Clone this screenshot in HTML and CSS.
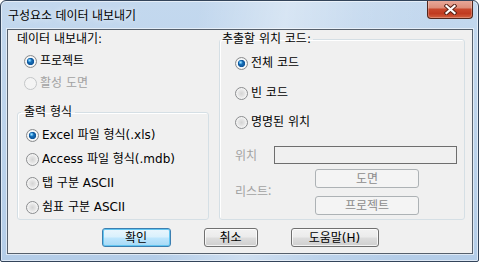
FILE: index.html
```html
<!DOCTYPE html>
<html lang="ko">
<head>
<meta charset="utf-8">
<title>구성요소 데이터 내보내기</title>
<link rel="stylesheet" href="styles.css">
</head>
<body>
<div class="window">
  <div class="titlebar">
    <span class="title">구성요소 데이터 내보내기</span>
    <div class="close">
      <svg width="13" height="11" viewBox="0 0 13 11">
        <path d="M2.5 2 L10.5 9 M10.5 2 L2.5 9" stroke="#5a2418" stroke-width="4.2" stroke-linecap="square" fill="none"/>
        <path d="M2.5 2 L10.5 9 M10.5 2 L2.5 9" stroke="#ffffff" stroke-width="2.2" stroke-linecap="square" fill="none"/>
      </svg>
    </div>
  </div>
  <div class="client">
    <div class="panels">
      <div class="left">
        <div class="caption">데이터 내보내기:</div>
        <label class="opt top1"><span class="radio on"></span>프로젝트</label>
        <label class="opt top2 disabled"><span class="radio"></span>활성 도면</label>
        <fieldset class="group format">
          <legend>출력 형식</legend>
          <div class="opts">
            <label class="opt"><span class="radio on"></span>Excel 파일 형식(.xls)</label>
            <label class="opt"><span class="radio"></span>Access 파일 형식(.mdb)</label>
            <label class="opt"><span class="radio"></span>탭 구분 ASCII</label>
            <label class="opt"><span class="radio"></span>쉼표 구분 ASCII</label>
          </div>
        </fieldset>
      </div>
      <fieldset class="group code">
        <legend>추출할 위치 코드:</legend>
        <label class="opt r1"><span class="radio on"></span>전체 코드</label>
        <label class="opt r2"><span class="radio"></span>빈 코드</label>
        <label class="opt r3"><span class="radio"></span>명명된 위치</label>
        <div class="loc">
          <span class="muted">위치</span>
          <span class="textbox"></span>
          <span class="muted list-label">리스트:</span>
          <div class="list-buttons">
            <span class="btn disabled">도면</span>
            <span class="btn disabled">프로젝트</span>
          </div>
        </div>
      </fieldset>
    </div>
    <div class="buttons">
      <span class="btn default ok">확인</span>
      <span class="btn cancel">취소</span>
      <span class="btn help">도움말(H)</span>
    </div>
  </div>
</div>
</body>
</html>
```

FILE: styles.css
```css
html, body {
  margin: 0;
  padding: 0;
  background: #ffffff;
}

body {
  font-family: "DejaVu Sans", "Noto Sans CJK KR", sans-serif;
  font-size: 12px;
  line-height: 16px;
  color: #000000;
}

.window {
  width: 479px;
  height: 262px;
  box-sizing: border-box;
  border: 1px solid #33445a;
  border-radius: 6px 6px 2px 2px;
  background:
    linear-gradient(100deg, rgba(255,255,255,0) 0%, rgba(255,255,255,0) 38%, rgba(255,255,255,0.35) 55%, rgba(255,255,255,0.1) 70%, rgba(255,255,255,0) 85%),
    linear-gradient(180deg, #c3d8ee 0%, #bcd3eb 50%, #b4cde8 100%);
  box-shadow: inset 0 0 0 1px rgba(255,255,255,0.55);
  display: flex;
  flex-direction: column;
  overflow: hidden;
}

.titlebar {
  height: 28px;
  display: flex;
  align-items: flex-start;
  justify-content: space-between;
}

.title {
  margin: 6px 0 0 7px;
  font-family: "Noto Sans CJK KR", sans-serif;
  color: #000000;
  text-shadow: 0 0 6px rgba(255,255,255,0.9);
}

.close {
  width: 46px;
  height: 19px;
  margin-top: -1px;
  margin-right: 5px;
  box-sizing: border-box;
  border: 1px solid #52261c;
  border-top: none;
  border-radius: 0 0 4px 4px;
  background: linear-gradient(180deg, #e9ab9c 0%, #de8f7b 42%, #c8472c 52%, #c03a20 75%, #d2603f 100%);
  box-shadow: inset 0 0 0 1px rgba(255,255,255,0.25);
  display: flex;
  align-items: center;
  justify-content: center;
}

.close svg {
  display: block;
  margin-top: 1px;
}

.client {
  flex: 1;
  margin: 0 5px 7px 6px;
  border: 1px solid #56606c;
  box-shadow: 0 0 0 1px rgba(255,255,255,0.55);
  background: #f0f0f0;
  padding: 1px 7px 0 9px;
  display: flex;
  flex-direction: column;
}

.panels {
  display: grid;
  grid-template-columns: 192px 1fr;
  column-gap: 10px;
  height: 189px;
}

.left {
  display: flex;
  flex-direction: column;
}

.caption {
  height: 16px;
}

.opt {
  display: flex;
  align-items: center;
  height: 16px;
  gap: 3px;
  white-space: nowrap;
}

.top1 {
  margin: 6px 0 0 7px;
}

.top2 {
  margin: 6px 0 0 7px;
}

.disabled {
  color: #a2a2a2;
}

.radio {
  width: 13px;
  height: 13px;
  flex: none;
  box-sizing: border-box;
  border-radius: 50%;
  border: 1px solid #8a8c8e;
  background: radial-gradient(circle at 50% 50%, #d4d4d4 0, #e4e4e4 3px, #f3f3f3 5px, #fafafa 6px);
}

.radio.on {
  background:
    radial-gradient(circle at 4.6px 4.4px, #aee4ff 0, #3e9fe0 1.4px, rgba(40,130,210,0) 2.2px),
    radial-gradient(circle at 50% 50%, #1b78c2 0, #0f5599 3.4px, #eef4f8 3.9px, #fbfbfb 4.6px, #dedede 6px);
}

.disabled .radio {
  border-color: #c4c6c8;
  background: #f4f4f4;
}

.group {
  margin: 0;
  padding: 0;
  min-width: 0;
  border: 1px solid #d5dfe5;
  border-radius: 3px;
  box-shadow: inset 1px 1px 0 #ffffff;
}

.group legend {
  line-height: 16px;
  height: 16px;
}

.format {
  margin-top: 13px;
  flex: 1;
  padding: 0 0 0 8px;
}

.format legend {
  margin-left: -5px;
  padding: 0 3px;
}

.opts {
  display: flex;
  flex-direction: column;
  gap: 8px;
  padding-top: 7px;
}

.code {
  padding: 0 0 0 15px;
}

.code legend {
  margin-left: -15px;
  padding: 0 2px;
}

.r1 {
  margin-top: 8px;
}

.r2 {
  margin-top: 14px;
}

.r3 {
  margin-top: 13px;
}

.loc {
  margin-top: 16px;
  display: grid;
  grid-template-columns: 39px 183px;
  grid-template-rows: 18px auto;
  row-gap: 5px;
  align-items: center;
}

.muted {
  color: #a2a2a2;
  font-family: "Noto Sans CJK KR", sans-serif;
  white-space: nowrap;
}

.textbox {
  height: 18px;
  box-sizing: border-box;
  border: 1px solid #6e6e6e;
  background: #f0f0f0;
}

.list-label {
  margin-bottom: 3px;
}

.list-buttons {
  display: flex;
  flex-direction: column;
  gap: 8px;
  margin-left: 41px;
}

.btn {
  height: 19px;
  box-sizing: border-box;
  border: 1px solid #707070;
  border-radius: 3px;
  background: linear-gradient(180deg, #f2f2f2 0%, #ebebeb 48%, #dddddd 52%, #cfcfcf 100%);
  box-shadow: inset 0 0 0 1px rgba(255,255,255,0.75);
  display: flex;
  align-items: center;
  justify-content: center;
  line-height: 16px;
  font-family: "DejaVu Sans", "Noto Sans CJK KR", sans-serif;
  color: #000000;
  white-space: nowrap;
}

.btn.disabled {
  width: 104px;
  border-color: #adb2b5;
  background: #f4f4f4;
  box-shadow: none;
  color: #8c8c8c;
}

.btn.default {
  border-color: #3c7fb1;
  background: linear-gradient(180deg, #eaf6fd 0%, #d9f0fc 48%, #bee6fd 52%, #a7d9f5 100%);
  box-shadow: inset 0 0 0 1px #63c6f1;
}

.buttons {
  display: flex;
  justify-content: center;
  gap: 33px;
  margin: 8px -7px 0 -9px;
}

.ok {
  width: 69px;
}

.cancel {
  width: 54px;
}

.help {
  width: 88px;
}
```
